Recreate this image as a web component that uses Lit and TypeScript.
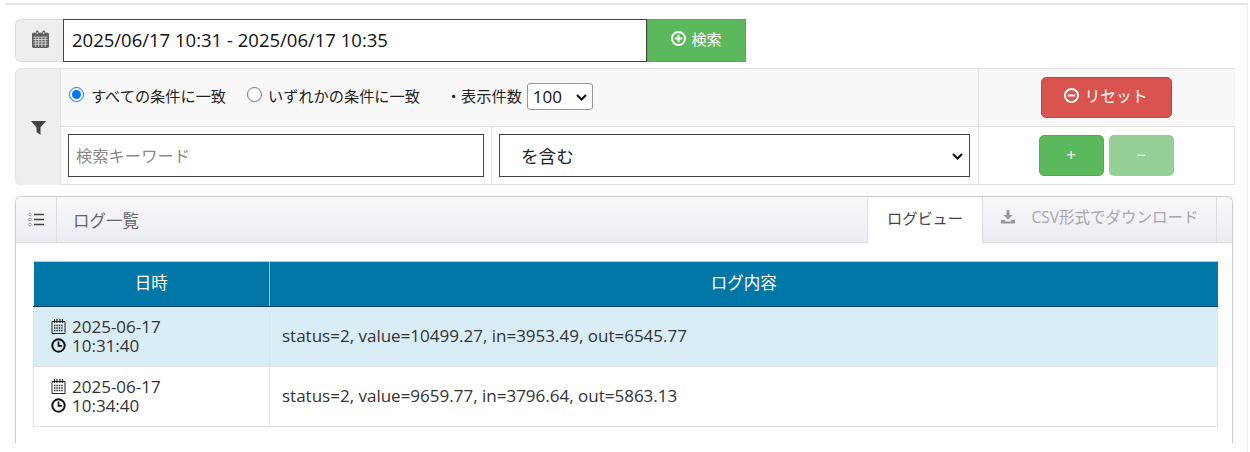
import { LitElement, html, css, svg } from "lit";
import { customElement } from "lit/decorators.js";

const calendar = svg`<svg class="ic" width="17" height="18" viewBox="0 0 18 19"><path fill="#5f5f5f" d="M1.500 3H4V2a1.500 1.500 0 0 1 3 0v1h4V2a1.500 1.500 0 0 1 3 0v1h2.500A1.500 1.500 0 0 1 18 4.500v13a1.500 1.500 0 0 1-1.500 1.500h-15A1.500 1.500 0 0 1 0 17.500v-13A1.500 1.500 0 0 1 1.500 3z"/><path fill="none" stroke="#eee" stroke-width=".8" d="M1.500 7.500h15M1.500 10h15M1.500 12.500h15M1.500 15h15M4 7.500V18M7 7.500V18M10.500 7.500V18M14 7.500V18"/><path fill="#eee" d="M5 2h1v2.600H5zM12 2h1v2.600h-1z"/></svg>`;
const calendarSmall = svg`<svg class="ic" width="15" height="15" viewBox="0 0 15 15"><path fill="none" stroke="#222" d="M1 2.500h13v12H1z"/><path stroke="#222" stroke-width="1.200" d="M3.500 0v4M6 0v4M9 0v4M11.500 0v4"/><path stroke="#222" stroke-dasharray="1.400 1" stroke-width="1.500" d="M3 6.500h9.500M3 9h9.500M3 11.500h9.500"/></svg>`;
const clock = svg`<svg class="ic" width="15" height="15" viewBox="0 0 15 15"><circle cx="7.500" cy="7.500" r="6.200" fill="none" stroke="#111" stroke-width="2"/><path fill="none" stroke="#111" stroke-width="1.700" d="M7.500 3.600v4.200h3.600"/></svg>`;
const plusCircle = svg`<svg class="ic" width="15" height="15" viewBox="0 0 15 15"><circle cx="7.500" cy="7.500" r="6.500" fill="none" stroke="currentColor" stroke-width="2"/><path stroke="currentColor" stroke-width="2" d="M3.800 7.500h7.400M7.500 3.800v7.400"/></svg>`;
const minusCircle = svg`<svg class="ic" width="15" height="15" viewBox="0 0 15 15"><circle cx="7.500" cy="7.500" r="6.500" fill="none" stroke="currentColor" stroke-width="2"/><path stroke="currentColor" stroke-width="2" d="M3.800 7.500h7.400"/></svg>`;
const filter = svg`<svg class="ic" width="15" height="15" viewBox="0 0 15 15"><path fill="#444" d="M0 1h15L9.500 7.500V15L5.500 12V7.500z"/></svg>`;
const list = svg`<svg class="ic" width="16" height="15" viewBox="0 0 16 15"><g fill="none" stroke="#999" stroke-width=".8"><circle cx="2" cy="2.500" r="1.400"/><circle cx="2" cy="7.500" r="1.400"/><circle cx="2" cy="12.500" r="1.400"/></g><path stroke="#444" stroke-width="1.600" d="M6 2.500h10M6 7.500h10M6 12.500h10"/></svg>`;
const download = svg`<svg class="ic" width="16" height="15" viewBox="0 0 16 15"><path fill="#999" d="M6.500 1h3v5h3L8 10.800 3.500 6h3zM1 11h3.500L6 12.500h4L11.500 11H15v3.500H1z"/></svg>`;
const chevron = svg`<svg class="chev" width="11" height="7" viewBox="0 0 11 7"><path fill="none" stroke="#111" stroke-width="2" d="M1 1l4.500 4.500L10 1"/></svg>`;

@customElement("app-root")
export class AppRoot extends LitElement {
  static styles = css`
    :host { display: block; width: 1250px; height: 452px; overflow: hidden; background: #fff; box-sizing: border-box;
      font-family: "Open Sans", "Noto Sans CJK JP", sans-serif; font-size: 15.200px; color: #222; }
    * { box-sizing: border-box; }
    .page { margin: 3px 2px 0 5px; border-top: 2px solid #e6e6e6; border-right: 1px solid #f0f0f0; padding: 14px 12px 0 10px; height: 449px; }
    .ic { display: block; flex: none; }

    .range { display: flex; width: 731px; height: 43px; }
    .addon { width: 48px; background: #eee; border: 1px solid #ddd; border-right: 0; border-radius: 6px 0 0 6px; display: flex; align-items: center; justify-content: center; padding: 0 0 3px 1px; }
    .range input { flex: 1; min-width: 0; border: 1px solid #444; border-radius: 0; padding: 0 8px 2px; font: inherit; font-size: 18.500px; color: #111; outline: none; }
    .search { width: 99px; background: #5cb85c; border: 1px solid #4cae4c; color: #fff; display: flex; align-items: center; justify-content: center; gap: 5px; font-size: 15px; padding-bottom: 4px; }

    .filter { display: grid; grid-template-columns: 46px 431px 487px 256px; grid-template-rows: 58px 58px; margin-top: 6px; width: 1220px; height: 117px; border: 1px solid #e2e2e2; border-left: 0; border-radius: 6px 0 0 6px; }
    .f-icon { grid-row: 1 / 3; background: #eee; border: 1px solid #e2e2e2; border-width: 0 1px 0 1px; border-radius: 6px 0 0 6px; display: flex; align-items: center; justify-content: center; }
    .f-opts { grid-column: 2 / 4; background: #f8f8f8; border-bottom: 1px solid #e2e2e2; border-right: 1px solid #e2e2e2; display: flex; align-items: center; padding: 0 0 3px 8px; }
    .f-reset { background: #f8f8f8; border-bottom: 1px solid #e2e2e2; display: flex; align-items: center; justify-content: center; padding-right: 2px; }
    .f-key { border-right: 1px solid #e2e2e2; padding: 7px 7px 0 7px; }
    .f-match { border-right: 1px solid #e2e2e2; padding: 7px 8px 0 7px; }
    .f-btns { display: flex; justify-content: center; gap: 5px; padding: 8px 2px 0 0; }
    .radio { display: flex; align-items: center; gap: 7px; margin: 0; padding-bottom: 2px; }
    .radio input { margin: 0 0 1px 0; width: 15px; height: 15px; accent-color: #0a75f0; }
    .radio + .radio { margin-left: 21px; gap: 6px; }
    .count { margin-left: 26px; display: flex; align-items: center; gap: 5px; }
    .count > span { padding-bottom: 2px; }
    .sel { position: relative; display: block; }
    .chev { position: absolute; top: 50%; margin-top: -3px; pointer-events: none; }
    .sel-s .chev { right: 6px; margin-top: -2px; }
    .sel-l .chev { right: 7px; }
    select { appearance: none; -webkit-appearance: none; display: block; outline: none; }
    .sel-s select { width: 66px; height: 27px; font: inherit; font-size: 17px; padding: 0 0 0 5px; background: #fff; border: 1px solid #999; border-radius: 3px; color: #111; }
    .text { width: 100%; height: 43px; border: 1px solid #444; border-radius: 0; padding: 0 7px; font: inherit; font-size: 16.300px; outline: none; }
    .text::placeholder { color: #8a8a8a; opacity: 1; }
    .sel-l select { width: 100%; height: 43px; border: 1px solid #444; border-radius: 0; background: #fff; font: inherit; font-size: 17.600px; padding: 0 0 0 21px; color: #222; }
    .btn { border-radius: 5px; color: #fff; display: flex; align-items: center; justify-content: center; font-size: 15.800px; }
    .reset { width: 131px; height: 41px; background: #d9534f; border: 1px solid #d43f3a; gap: 5px; padding-bottom: 4px; }
    .add { width: 65px; height: 41px; background: #5cb85c; border: 1px solid #4cae4c; font-size: 17px; padding-bottom: 3px; }
    .sub { width: 65px; height: 41px; background: #96d096; font-size: 17px; padding-bottom: 3px; }

    .panel { margin-top: 11px; width: 1218px; height: 247px; border: 1px solid #ccc; border-bottom: 0; border-radius: 6px 6px 0 0; }
    .bar { display: flex; height: 46px; background: linear-gradient(#f9f9fb, #ebebf3); border-bottom: 1px solid #ddd; border-radius: 6px 6px 0 0; color: #666; }
    .bar-ic { width: 41px; display: flex; align-items: center; justify-content: center; border-right: 1px solid #ddd; }
    .bar-title { flex: 1; display: flex; align-items: center; padding-left: 16px; font-size: 16.500px; }
    .tab { width: 115px; height: 46px; background: #fff; border-left: 1px solid #e2e2e2; color: #444; display: flex; align-items: center; justify-content: center; padding-bottom: 6px; }
    .tab-dl { width: 235px; border-left: 1px solid #ddd; border-right: 1px solid #ddd; display: flex; align-items: center; justify-content: center; gap: 15px; color: #a8a8a8; padding-bottom: 6px; font-size: 15.500px; }
    .bar-end { width: 15px; }
    .body { padding: 18px 14px 0 17px; }
    table { width: 1185px; border-collapse: collapse; table-layout: fixed; font-size: 17px; }
    th { background: #0077a6; color: #fff; font-weight: 400; height: 45px; border-left: 1px solid #9cc3d6; border-bottom: 1px solid #0a3a4f; border-top: 1px solid #bcd; padding: 0 0 4px; font-size: 16.500px; }
    th:first-child { border-left: 0; width: 236px; }
    td { border: 1px solid #e2e2e2; height: 60px; padding: 0 12px 3px; color: #333; }
    tr.hl td { background: #d9edf6; }
    td.dt { padding: 0 12px 1px 17px; line-height: 19px; }
    .dt-cell { display: flex; gap: 6px; }
    .dt-icons { display: flex; flex-direction: column; gap: 4px; padding-top: 2px; }
  `;

  private dateCell(time: string) {
    return html`<td class="dt"><div class="dt-cell"><div class="dt-icons">${calendarSmall}${clock}</div><div>2025-06-17<br />${time}</div></div></td>`;
  }

  render() {
    return html`
      <div class="page">
        <div class="range">
          <div class="addon">${calendar}</div>
          <input type="text" .value=${"2025/06/17 10:31 - 2025/06/17 10:35"} />
          <div class="search">${plusCircle}<span>検索</span></div>
        </div>
        <div class="filter">
          <div class="f-icon">${filter}</div>
          <div class="f-opts">
            <label class="radio"><input type="radio" name="m" checked />すべての条件に一致</label>
            <label class="radio"><input type="radio" name="m" />いずれかの条件に一致</label>
            <div class="count"><span>・表示件数</span>
              <div class="sel sel-s"><select><option>100</option></select>${chevron}</div>
            </div>
          </div>
          <div class="f-reset"><div class="btn reset">${minusCircle}<span>リセット</span></div></div>
          <div class="f-key"><input class="text" placeholder="検索キーワード" /></div>
          <div class="f-match"><div class="sel sel-l"><select><option>を含む</option></select>${chevron}</div></div>
          <div class="f-btns"><div class="btn add">+</div><div class="btn sub">−</div></div>
        </div>
        <div class="panel">
          <div class="bar">
            <div class="bar-ic">${list}</div>
            <div class="bar-title">ログ一覧</div>
            <div class="tab">ログビュー</div>
            <div class="tab-dl">${download}<span>CSV形式でダウンロード</span></div>
            <div class="bar-end"></div>
          </div>
          <div class="body">
            <table>
              <thead><tr><th>日時</th><th>ログ内容</th></tr></thead>
              <tbody>
                <tr class="hl">
                  ${this.dateCell("10:31:40")}
                  <td>status=2, value=10499.27, in=3953.49, out=6545.77</td>
                </tr>
                <tr>
                  ${this.dateCell("10:34:40")}
                  <td>status=2, value=9659.77, in=3796.64, out=5863.13</td>
                </tr>
              </tbody>
            </table>
          </div>
        </div>
      </div>
    `;
  }
}
